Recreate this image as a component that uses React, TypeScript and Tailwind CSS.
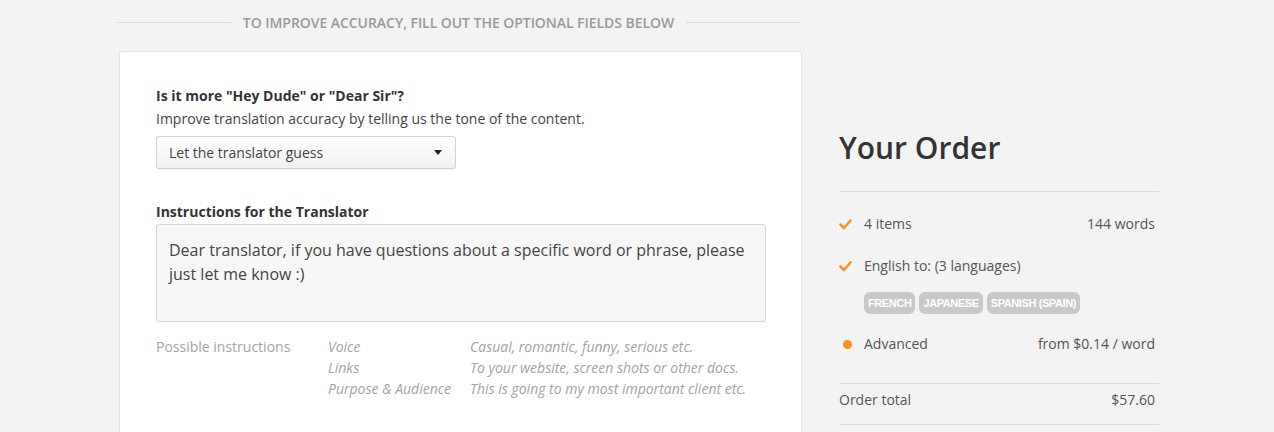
import React from 'react';

const hints = [
  ['Voice', 'Casual, romantic, funny, serious etc.'],
  ['Links', 'To your website, screen shots or other docs.'],
  ['Purpose & Audience', 'This is going to my most important client etc.'],
];

const languages = ['French', 'Japanese', 'Spanish (Spain)'];

function Check() {
  return (
    <svg width="13" height="11" viewBox="0 0 13 11" className="shrink-0">
      <path d="M1.5 5.5 L5 9 L11.5 1.5" fill="none" stroke="#f7931e" strokeWidth="2.6" strokeLinecap="round" strokeLinejoin="round" />
    </svg>
  );
}

export default function App() {
  return (
    <div className="min-h-[432px] bg-[#f3f3f3] font-['Open_Sans',sans-serif] overflow-hidden">
      <div className="flex pl-[117px]">
        {/* form column */}
        <div className="w-[685px] shrink-0">
          <div className="flex items-center h-[44px] mr-[2px]">
            <div className="flex-1 h-px bg-[#dcdcdc]" />
            <div className="px-[12px] text-[14px] font-semibold uppercase text-[#9a9a9a] tracking-[-0.05px]">
              To improve accuracy, fill out the optional fields below
            </div>
            <div className="flex-1 h-px bg-[#dcdcdc]" />
          </div>

          <div className="ml-[2px] mt-[7px] h-[400px] bg-white border border-[#e4e4e4] rounded-[3px] shadow-[0_1px_2px_rgba(0,0,0,0.06)] pl-[36px] pr-[36px] pt-[34px]">
            <div className="text-[14px] leading-[20px] font-bold text-[#333]">
              Is it more "Hey Dude" or "Dear Sir"?
            </div>
            <div className="text-[14px] leading-[20px] text-[#444] mt-[3px]">
              Improve translation accuracy by telling us the tone of the content.
            </div>
            <div className="mt-[7px] w-[300px] h-[33px] flex items-center justify-between pl-[12px] pr-[13px] border border-[#d2d2d2] rounded-[3px] bg-gradient-to-b from-white to-[#f1f1f1] shadow-[0_1px_1px_rgba(0,0,0,0.05)] text-[14px] text-[#444]">
              <span>Let the translator guess</span>
              <svg width="8" height="5" viewBox="0 0 8 5">
                <path d="M0 0 L8 0 L4 5 Z" fill="#222" />
              </svg>
            </div>

            <div className="mt-[33px] text-[14px] leading-[20px] font-bold text-[#333]">
              Instructions for the Translator
            </div>
            <div className="mt-[2px] w-[610px] h-[98px] border border-[#d6d6d6] rounded-[3px] bg-[#f7f7f7] px-[12px] pt-[13px] text-[16px] leading-[24px] text-[#444]">
              Dear translator, if you have questions about a specific word or phrase, please just let me know :)
            </div>

            <div className="mt-[14px] flex text-[14px] leading-[21px] text-[#a3a3a3]">
              <div className="w-[172px] shrink-0">Possible instructions</div>
              <div className="grid grid-cols-[142px_1fr] italic">
                {hints.map(([k, v]) => (
                  <React.Fragment key={k}>
                    <div>{k}</div>
                    <div>{v}</div>
                  </React.Fragment>
                ))}
              </div>
            </div>
          </div>
        </div>

        {/* order column */}
        <div className="ml-[37px] w-[320px] shrink-0 pt-[126px]">
          <div className="text-[30px] leading-[44px] text-[#333] font-semibold">Your Order</div>
          <div className="mt-[21px] h-px bg-[#dcdcdc]" />

          <div className="mt-[22px] flex items-center justify-between text-[14px] leading-[20px] text-[#555] pr-[4px]">
            <div className="flex items-center gap-[12px]">
              <Check />
              <span>4 items</span>
            </div>
            <span>144 words</span>
          </div>

          <div className="mt-[22px] flex items-center gap-[12px] text-[14px] leading-[20px] text-[#555]">
            <Check />
            <span>English to: (3 languages)</span>
          </div>
          <div className="mt-[16px] ml-[25px] flex gap-[4px]">
            {languages.map(l => (
              <span key={l} className="h-[22px] px-[4px] flex items-center rounded-[6px] bg-[#c9c9c9] text-white text-[11px] font-bold uppercase font-['Liberation_Sans',sans-serif] tracking-[-0.4px]">
                {l}
              </span>
            ))}
          </div>

          <div className="mt-[20px] flex items-center justify-between text-[14px] leading-[20px] text-[#555] pr-[4px]">
            <div className="flex items-center">
              <span className="ml-[4px] w-[9px] h-[9px] rounded-full bg-[#f7931e]" />
              <span className="ml-[12px]">Advanced</span>
            </div>
            <span>from $0.14 / word</span>
          </div>

          <div className="mt-[29px] h-px bg-[#dcdcdc]" />
          <div className="h-[40px] pt-[6px] flex items-start justify-between text-[14px] leading-[20px] text-[#555] pr-[4px]">
            <span>Order total</span>
            <span>$57.60</span>
          </div>
          <div className="h-px bg-[#dcdcdc]" />
        </div>
      </div>
    </div>
  );
}
